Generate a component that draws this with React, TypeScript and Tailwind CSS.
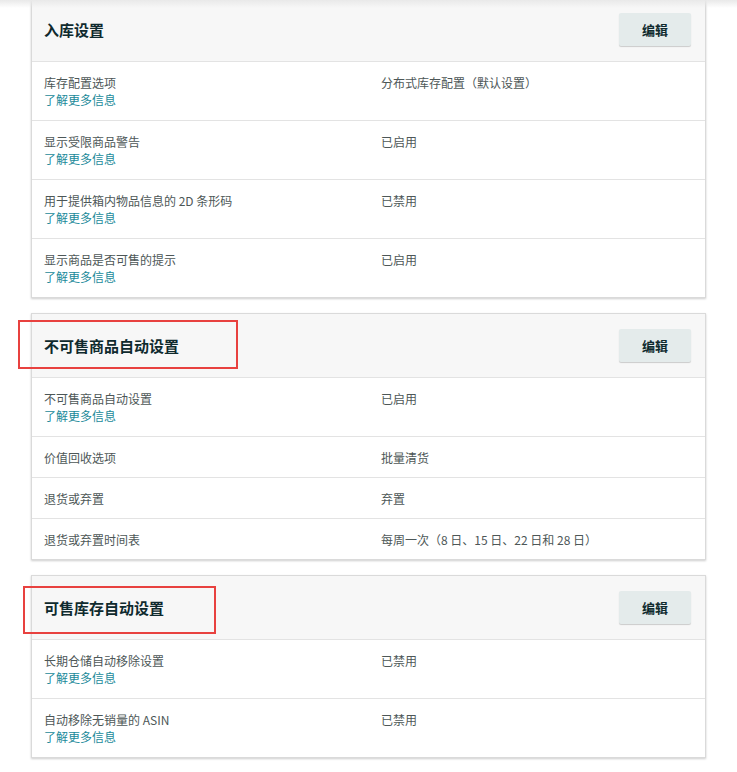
import React from "react";

type Row = { label: string; value: string; link?: boolean };

const sections: { title: string; rows: Row[]; box?: string }[] = [
  {
    title: "入库设置",
    rows: [
      { label: "库存配置选项", value: "分布式库存配置（默认设置）", link: true },
      { label: "显示受限商品警告", value: "已启用", link: true },
      { label: "用于提供箱内物品信息的 2D 条形码", value: "已禁用", link: true },
      { label: "显示商品是否可售的提示", value: "已启用", link: true },
    ],
  },
  {
    title: "不可售商品自动设置",
    box: "left-[-14px] top-[6px] w-[220px] h-[49px]",
    rows: [
      { label: "不可售商品自动设置", value: "已启用", link: true },
      { label: "价值回收选项", value: "批量清货" },
      { label: "退货或弃置", value: "弃置" },
      { label: "退货或弃置时间表", value: "每周一次（8 日、15 日、22 日和 28 日）" },
    ],
  },
  {
    title: "可售库存自动设置",
    box: "left-[-9px] top-[10px] w-[193px] h-[48px]",
    rows: [
      { label: "长期仓储自动移除设置", value: "已禁用", link: true },
      { label: "自动移除无销量的 ASIN", value: "已禁用", link: true },
    ],
  },
];

export default function App() {
  return (
    <div className="relative min-h-[772px] w-[737px] overflow-hidden bg-white font-['Noto_Sans_CJK_SC','Noto_Sans',sans-serif]">
      <div className="pointer-events-none absolute inset-x-0 top-0 z-10 h-[8px] bg-gradient-to-b from-[#e9e9e9] to-transparent" />
      <div className="mt-[-3px] flex flex-col gap-[15px] pl-[31px]">
        {sections.map((s) => (
          <div
            key={s.title}
            className="relative w-[675px] border border-[#dadada] bg-white shadow-[0_1px_2px_rgba(0,0,0,0.2)]"
          >
            <div className="flex h-[64px] items-center justify-between border-b border-[#e3e3e3] bg-[#f7f7f7] pl-3 pr-[14px]">
              <div className="text-[15px] font-bold leading-[20px] text-[#0f2a2e]">{s.title}</div>
              <button className="h-[33px] w-[72px] rounded-[2px] bg-[#e4ebeb] text-[13px] font-bold text-[#0f2a2e] shadow-[0_1px_1px_rgba(0,0,0,0.18)]">
                编辑
              </button>
            </div>
            {s.box && (
              <div className={`pointer-events-none absolute border-2 border-[#e8413f] ${s.box}`} />
            )}
            {s.rows.map((r, i) => (
              <div
                key={r.label}
                className={`grid grid-cols-[337px_1fr] px-3 pt-3 text-[12px] leading-[17px] ${
                  r.link ? "pb-3" : "pb-[11px]"
                } ${i > 0 ? "border-t border-[#e3e3e3]" : ""}`}
              >
                <div>
                  <div className="text-[#4d5757]">{r.label}</div>
                  {r.link && <div className="text-[#1b8a9a]">了解更多信息</div>}
                </div>
                <div className="text-[#4d5757]">{r.value}</div>
              </div>
            ))}
          </div>
        ))}
      </div>
    </div>
  );
}
